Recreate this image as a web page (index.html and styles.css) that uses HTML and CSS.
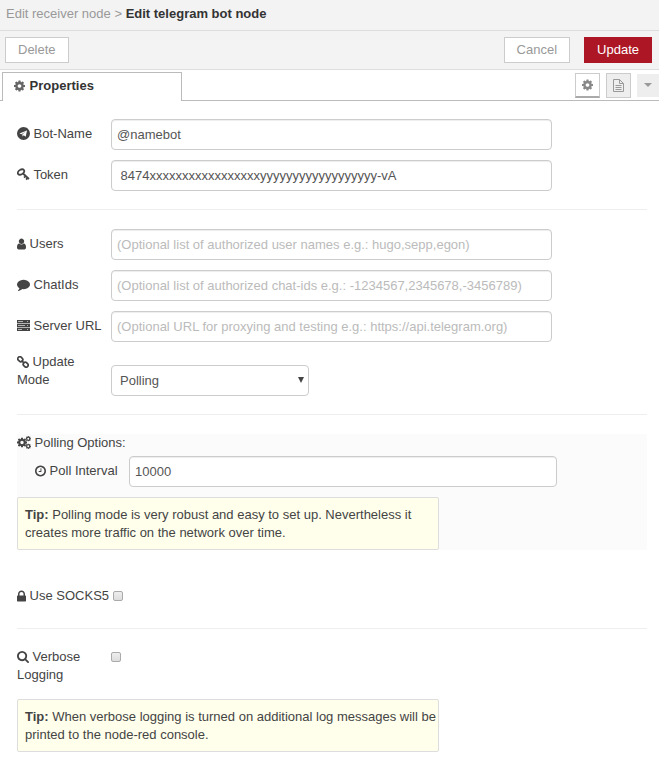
FILE: index.html
```html
<!DOCTYPE html>
<html lang="en">
<head>
<meta charset="utf-8">
<title>Edit telegram bot node</title>
<link rel="stylesheet" href="styles.css">
</head>
<body>
<svg class="defs" aria-hidden="true">
  <symbol id="cog" viewBox="128 128 1536 1536"><path d="M1152 896q0-106-75-181t-181-75-181 75-75 181 75 181 181 75 181-75 75-181zm512-109v222q0 12-8 23t-20 13l-185 28q-19 54-39 91 35 50 107 138 10 12 10 25t-9 23q-27 37-99 108t-94 71q-12 0-26-9l-138-108q-44 23-91 38-16 136-29 186-7 28-36 28h-222q-14 0-24.5-8.5t-11.5-21.5l-28-184q-49-16-90-37l-141 107q-10 9-25 9-14 0-25-11-126-114-165-168-7-10-7-23 0-12 8-23 15-21 51-66.5t54-70.5q-27-50-41-99l-183-27q-13-2-21-12.5t-8-23.5v-222q0-12 8-23t19-13l186-28q14-46 39-92-40-57-107-138-10-12-10-24 0-10 9-23 26-36 98.5-107.5t94.5-71.5q13 0 26 10l138 107q44-23 91-38 16-136 29-186 7-28 36-28h222q14 0 24.5 8.5t11.5 21.5l28 184q49 16 90 37l142-107q9-9 24-9 13 0 25 10 129 119 165 170 7 8 7 22 0 12-8 23-15 21-51 66.5t-54 70.5q26 50 41 98l183 28q13 2 21 12.5t8 23.5z"/></symbol>
</svg>

<header>
  <nav class="crumbs"><a href="#">Edit receiver node</a> <span>&gt;</span> <strong>Edit telegram bot node</strong></nav>
  <div class="toolbar">
    <button type="button">Delete</button>
    <button type="button" class="cancel">Cancel</button>
    <button type="submit" form="node-form" class="primary">Update</button>
  </div>
</header>

<div class="tabs">
  <button type="button" class="tab"><svg class="w11"><use href="#cog"/></svg> Properties</button>
  <button type="button" class="tool active" aria-label="Properties"><svg class="w11"><use href="#cog"/></svg></button>
  <button type="button" class="tool" aria-label="Description"><svg class="w11 doc" viewBox="0 0 11 13" fill="none" stroke="currentColor"><path d="M.5.5h6l4 4v8H.5zM6.500.5v4h4M2.500 6.500h6M2.500 8.500h6M2.500 10.500h6"/></svg></button>
  <button type="button" class="tool more" aria-label="More"><svg class="caret" viewBox="0 0 8 4"><path d="M0 0h8L4 4z"/></svg></button>
</div>

<form id="node-form">
  <div class="row">
    <label for="name"><svg class="w13" viewBox="0 0 13 13"><path fill-rule="evenodd" d="M6.500 0a6.500 6.500 0 1 1 0 13a6.500 6.500 0 0 1 0-13zM2.400 6.400L10 3.400L8.700 9.700L6.700 8.300L5.600 9.400L5.300 7.500L8.500 4.800L4.500 7.200z"/></svg> Bot-Name</label>
    <input type="text" id="name" value="@namebot">
  </div>
  <div class="row">
    <label for="token"><svg class="w13" viewBox="0 0 13 13" fill="none" stroke="currentColor"><ellipse cx="4" cy="4" rx="3.500" ry="2.300" transform="rotate(-35 4 4)" stroke-width="1.800"/><path d="M6 5.500l6 5.500M8.600 8l-1.500 1.700M10.700 9.800l-1.600 1.800" stroke-width="1.800"/></svg> Token</label>
    <input type="text" id="token" value=" 8474xxxxxxxxxxxxxxxxxyyyyyyyyyyyyyyyyyy-vA">
  </div>
  <hr>
  <div class="row">
    <label for="users"><svg class="w9" viewBox="256 128 1280 1536"><path d="M1536 1399q0 109-62.5 187t-150.5 78h-854q-88 0-150.5-78t-62.5-187q0-85 8.5-160.5t31.5-152 58.5-131 94-89 134.5-34.5q131 128 313 128t313-128q76 0 134.5 34.5t94 89 58.5 131 31.5 152 8.5 160.5zm-256-887q0 159-112.5 271.5t-271.5 112.5-271.5-112.5-112.5-271.5 112.5-271.5 271.5-112.5 271.5 112.5 112.5 271.5z"/></svg> Users</label>
    <input type="text" id="users" placeholder="(Optional list of authorized user names e.g.: hugo,sepp,egon)">
  </div>
  <div class="row">
    <label for="chatids"><svg class="w13" viewBox="0 0 1792 1792"><path d="M1792 896q0 174-120 321.5t-326 233-450 85.5q-70 0-145-8-198 175-460 242-49 14-114 22-17 2-30.5-9t-17.5-29v-1q-3-4-.5-12t2-10 4.5-9.5l6-9 7-8.5 8-9q7-8 31-34.5t34.5-38 31-39.5 32.5-51 27-59 26-76q-157-89-247.5-220t-90.5-281q0-130 71-248.5t191-204.5 286-136.5 348-50.5q244 0 450 85.5t326 233 120 321.5z"/></svg> ChatIds</label>
    <input type="text" id="chatids" placeholder="(Optional list of authorized chat-ids e.g.: -1234567,2345678,-3456789)">
  </div>
  <div class="row">
    <label for="server"><svg class="w13" viewBox="0 0 13 13"><path fill-rule="evenodd" d="M0 1h13v3H0zM1 2v1h5V2zM10 2v1h1V2zM0 5h13v3H0zM1 6v1h7V6zM10 6v1h1V6zM0 9h13v3H0zM1 10v1h4v-1zM10 10v1h1v-1z"/><path opacity=".4" d="M0 1h13v11H0z"/></svg> Server URL</label>
    <input type="text" id="server" placeholder="(Optional URL for proxying and testing e.g.: https://api.telegram.org)">
  </div>
  <div class="row mode">
    <label for="mode"><svg class="w12" viewBox="0 0 12 12" fill="none" stroke="currentColor" stroke-width="1.700"><rect x="-2.600" y="-2" width="5.200" height="4" rx="1.800" transform="translate(3.300 3.200) rotate(45)"/><rect x="-2.600" y="-2" width="5.200" height="4" rx="1.800" transform="translate(8.700 8.700) rotate(45)"/><path d="M4.600 4.600l2.800 2.800"/></svg> Update Mode</label>
    <span class="select"><select id="mode"><option>Polling</option><option>Webhook</option></select></span>
  </div>
  <hr>
  <section class="options">
    <div><svg class="w14" viewBox="0 0 14 13"><use href="#cog" x="0" y="1.500" width="10" height="10"/><use href="#cog" x="8.500" y="0" width="5.500" height="5.500"/><use href="#cog" x="8.500" y="7.500" width="5.500" height="5.500"/></svg> Polling Options:</div>
    <div class="row interval">
      <label for="interval"><svg class="w11" viewBox="128 128 1536 1536"><path d="M1024 544v448q0 14-9 23t-23 9h-320q-14 0-23-9t-9-23v-64q0-14 9-23t23-9h224v-352q0-14 9-23t23-9h64q14 0 23 9t9 23zm416 352q0-148-73-273t-198-198-273-73-273 73-198 198-73 273 73 273 198 198 273 73 273-73 198-198 73-273zm224 0q0 209-103 385.500t-279.500 279.500-385.500 103-385.500-103-279.500-279.500-103-385.500 103-385.500 279.500-279.500 385.500-103 385.500 103 279.500 279.500 103 385.500z"/></svg> Poll Interval</label>
      <input type="text" id="interval" value="10000">
    </div>
    <p class="tip"><b>Tip:</b> Polling mode is very robust and easy to set up. Nevertheless it creates more traffic on the network over time.</p>
  </section>
  <div class="row check socks">
    <label for="socks"><svg class="w9" viewBox="320 128 1152 1408"><path d="M640 768h512v-192q0-106-75-181t-181-75-181 75-75 181v192zm832 96v576q0 40-28 68t-68 28h-960q-40 0-68-28t-28-68v-576q0-40 28-68t68-28h32v-192q0-184 132-316t316-132 316 132 132 316v192h32q40 0 68 28t28 68z"/></svg> Use SOCKS5</label>
    <input type="checkbox" id="socks">
  </div>
  <hr>
  <div class="row check">
    <label for="verbose"><svg class="w12" viewBox="64 128 1664 1664"><path d="M1216 832q0-185-131.500-316.500t-316.500-131.500-316.500 131.500-131.500 316.500 131.500 316.500 316.500 131.500 316.500-131.500 131.500-316.500zm512 832q0 52-38 90t-90 38q-54 0-90-38l-343-342q-179 124-399 124-143 0-273.500-55.500t-225-150-150-225-55.500-273.500 55.500-273.500 150-225 225-150 273.500-55.500 273.500 55.500 225 150 150 225 55.500 273.500q0 220-124 399l343 343q37 37 37 90z"/></svg> Verbose Logging</label>
    <input type="checkbox" id="verbose">
  </div>
  <p class="tip last"><b>Tip:</b> When verbose logging is turned on additional log messages will be printed to the node-red console.</p>
</form>
</body>
</html>
```
FILE: styles.css
```css
* { box-sizing: border-box; }
body {
  margin: 0;
  background: #fff;
  color: #444;
  font: 13px/18px "Liberation Sans", Arial, sans-serif;
}
button, input, select { font: inherit; color: inherit; margin: 0; }
svg { height: 12px; fill: currentColor; vertical-align: -2px; }
svg[fill="none"] { fill: none; }
.defs { position: absolute; width: 0; height: 0; }
.w9 { width: 9px; }
.w11 { width: 11px; }
.w12 { width: 12px; }
.w13 { width: 13px; height: 13px; }
.w14 { width: 14px; height: 13px; }

header { background: #f3f3f3; border-bottom: 1px solid #ddd; }
.crumbs { padding: 5px 6px 7px; border-bottom: 1px solid #ddd; color: #999; }
.crumbs a { color: inherit; text-decoration: none; }
.crumbs strong { color: #333; }
.toolbar { display: flex; padding: 6px 7px 6px 5px; }
.toolbar button {
  height: 26px;
  padding: 0 12px;
  border: 1px solid #ccc;
  background: #fff;
  color: #999;
}
.toolbar .cancel { margin-left: auto; }
.toolbar .primary {
  margin-left: 14px;
  border-color: #ad1625;
  background: #ad1625;
  color: #fff;
}

.tabs {
  display: flex;
  align-items: center;
  height: 31px;
  padding-left: 2px;
  border-bottom: 1px solid #bbb;
}
.tab {
  flex: 0 0 180px;
  align-self: flex-end;
  height: 29px;
  margin-bottom: -1px;
  padding: 0 11px 2px;
  border: 1px solid #bbb;
  border-bottom: 0;
  background: #fff;
  color: #333;
  font-weight: bold;
  text-align: left;
}
.tab svg { margin-right: 1px; color: #666; }
.tool {
  display: grid;
  place-items: center;
  width: 25px;
  height: 25px;
  margin-left: 6px;
  padding: 0;
  border: 1px solid #ccc;
  background: #eee;
  color: #999;
}
.tool.active {
  margin-left: auto;
  border-bottom: 2px solid #aaa;
  background: #fff;
  color: #888;
}
.doc { height: 13px; }
.tool.more { width: 22px; height: 23px; border: 0; }
.caret { width: 8px; height: 4px; }

form { padding: 18px 12px 7px 17px; }
.row { display: flex; margin-bottom: 10px; }
.row label { flex: 0 0 90px; margin-right: 4px; padding-top: 6px; }
input[type="text"], select {
  width: 70%;
  height: 31px;
  padding: 0 5px;
  border: 1px solid #ccc;
  border-radius: 4px;
  background: #fff;
  color: #555;
  box-shadow: inset 0 1px 1px rgba(0, 0, 0, 0.075);
}
::placeholder { color: #bbb; opacity: 1; }
hr { margin: 18px 0 19px; border: 0; border-top: 1px solid #eee; }

.row.mode label { padding-top: 1px; }
.select { position: relative; width: 198px; margin-top: 13px; }
.select select { width: 100%; padding: 0 8px; appearance: none; box-shadow: none; }
.select::after {
  content: "";
  position: absolute;
  top: 12px;
  right: 5px;
  border: solid transparent;
  border-width: 6px 3px 0;
  border-top-color: #444;
  pointer-events: none;
}

.options { background: #fbfbfb; }
.interval { margin-top: 4px; padding-left: 18px; }
.interval input { flex: 0 0 70%; }
.tip {
  width: 67%;
  margin: 0;
  padding: 8px 0 7px 7px;
  border: 1px solid #ddd;
  border-radius: 2px;
  background: #ffffec;
}
.row.check label { padding-top: 0; }
.row.socks { margin: 37px 0 23px; }
.row.socks label { white-space: nowrap; }
.check input {
  appearance: none;
  width: 10px;
  height: 10px;
  margin-top: 4px;
  border: 1px solid #aaa;
  border-radius: 2px;
  background: linear-gradient(#eee, #ddd);
}
.last { margin-top: 15px; }
```
